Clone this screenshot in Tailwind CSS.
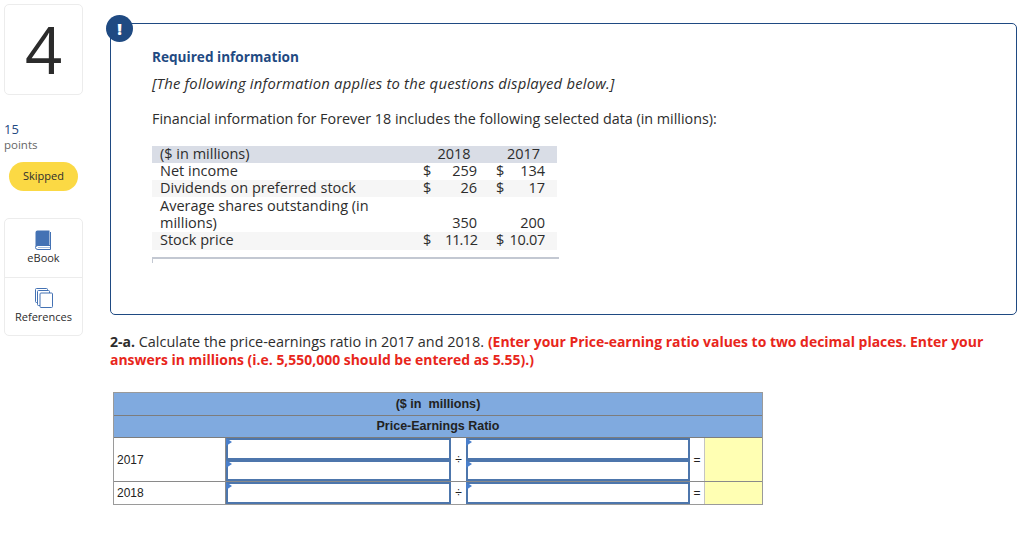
<!DOCTYPE html>
<html lang="en">
<head>
  <meta charset="UTF-8">
  <meta name="viewport" content="width=device-width, initial-scale=1.0">
  <title>Required information</title>
  <script src="https://cdn.jsdelivr.net/npm/@tailwindcss/browser@4"></script>
</head>
<body class="bg-white font-['Open_Sans',sans-serif] text-[#2d2d2d] overflow-hidden">
  <div class="flex w-[1024px] h-[541px]">
    <!-- Sidebar -->
    <aside class="w-[110px] shrink-0 pt-[4px] pl-[4px]">
      <div class="w-[79px] h-[91px] border border-[#ececec] rounded-[5px] flex items-center justify-center text-[65px] leading-none text-[#2b2b2b]">4</div>
      <div class="mt-[26px] text-[13px] leading-[16px] font-medium text-[#1f4a82]">15</div>
      <div class="text-[11.5px] leading-[15px] text-[#666]">points</div>
      <div class="mt-[10px] ml-[5px] w-[69px] h-[29px] rounded-full bg-[#fbd944] flex items-center justify-center text-[11px]">Skipped</div>
      <div class="mt-[27px] w-[79px] h-[118px] border border-[#ececec] rounded-[5px] flex flex-col">
        <div class="h-[59px] border-b border-[#ececec] flex flex-col items-center pt-[11px]">
          <svg width="17" height="20" viewBox="0 0 17 20">
            <path d="M2.5 0.5H14.5V15.5H3.5Q1 15.5 0.5 17V2.5Q0.5 0.5 2.5 0.5Z" fill="#4472b4"/>
            <path d="M15.5 2V19.5H3Q0.5 19.5 0.5 17.5Q0.5 15.5 3 15.5H15" fill="none" stroke="#4472b4" stroke-width="1"/>
            <path d="M3 17.5H15" stroke="#a9c0e0" stroke-width="1"/>
          </svg>
          <div class="mt-[1px] text-[11px] leading-[14px]">eBook</div>
        </div>
        <div class="flex-1 flex flex-col items-center pt-[10px]">
          <svg width="18" height="20" viewBox="0 0 18 20" fill="#fff" stroke="#4472b4" stroke-width="1">
            <rect x="0.5" y="0.5" width="12" height="14" rx="1"/>
            <rect x="2.5" y="2.5" width="12" height="15" rx="1"/>
            <rect x="5" y="5" width="12.5" height="14.5" rx="1"/>
          </svg>
          <div class="mt-[2px] text-[11px] leading-[14px]">References</div>
        </div>
      </div>
    </aside>

    <main class="flex-1 pt-[23px]">
      <!-- Callout -->
      <section class="relative w-[907px] h-[292px] border border-[#1f4a82] rounded-[5px] pl-[41px] pt-[24px]">
        <div class="absolute left-[-5px] top-[-9px] w-[27px] h-[27px] rounded-full bg-[#1f4a82] flex items-center justify-center text-white text-[16px] font-extrabold">!</div>
        <h2 class="text-[13.6px] leading-[18px] font-bold text-[#1f4a82]">Required information</h2>
        <p class="mt-[8px] text-[14.8px] leading-[18px] italic tracking-[0.22px]">[The following information applies to the questions displayed below.]</p>
        <p class="mt-[18px] text-[14.33px] leading-[18px]">Financial information for Forever 18 includes the following selected data (in millions):</p>

        <table class="mt-[18px] w-[405px] table-fixed border-collapse text-[14.5px] leading-[15px]">
          <colgroup>
            <col class="w-[271px]"><col class="w-[20px]"><col class="w-[53px]"><col class="w-[20px]"><col class="w-[41px]">
          </colgroup>
          <tbody>
            <tr class="bg-[#d9dde6]">
              <td class="pl-[8px] pb-[2px]">($ in millions)</td>
              <td colspan="2" class="text-center pr-[11px] pb-[2px]">2018</td>
              <td colspan="2" class="text-center pr-[6px] pb-[2px]">2017</td>
            </tr>
            <tr>
              <td class="pl-[8px] pb-[2px]">Net income</td>
              <td class="pb-[2px]">$</td><td class="text-right pr-[19px] pb-[2px]">259</td>
              <td class="pb-[2px]">$</td><td class="text-right pr-[12px] pb-[2px]">134</td>
            </tr>
            <tr class="bg-[#f6f6f6]">
              <td class="pl-[8px] pb-[2px]">Dividends on preferred stock</td>
              <td class="pb-[2px]">$</td><td class="text-right pr-[19px] pb-[2px]">26</td>
              <td class="pb-[2px]">$</td><td class="text-right pr-[12px] pb-[2px]">17</td>
            </tr>
            <tr class="leading-[17px]">
              <td class="pl-[8px] pr-[40px] pb-[1px]">Average shares outstanding (in millions)</td>
              <td></td><td class="text-right pr-[19px] pb-[1px] align-bottom">350</td>
              <td></td><td class="text-right pr-[12px] pb-[1px] align-bottom">200</td>
            </tr>
            <tr class="bg-[#f6f6f6]">
              <td class="pl-[8px] pb-[3px]">Stock price</td>
              <td class="pb-[3px]">$</td><td class="text-right pr-[19px] pb-[3px] tracking-[-1px]">11.12</td>
              <td colspan="2" class="pr-[12px] pb-[3px]"><div class="flex justify-between"><span>$</span><span class="tracking-[-0.3px]">10.07</span></div></td>
            </tr>
          </tbody>
        </table>
        <div class="mt-[7px] w-[407px] h-[6px] border-t-2 border-l border-[#c3c8d2]"></div>
      </section>

      <!-- Question -->
      <p class="mt-[18px] w-[900px] text-[14.45px] leading-[17.5px] whitespace-nowrap"><b class="text-[14px]">2-a.</b> Calculate the price-earnings ratio in 2017 and 2018. <b class="text-[13.95px] text-[#e8261b]">(Enter your Price-earning ratio values to two decimal places. Enter your</b><br><b class="text-[13.95px] text-[#e8261b]">answers in millions (i.e. 5,550,000 should be entered as 5.55).)</b></p>

      <!-- Answer grid -->
      <div class="mt-[24px] ml-[3px] w-[650px] font-['Liberation_Sans',sans-serif] text-[12px] text-[#222] border border-[#9a9a9a]">
        <div class="h-[23px] bg-[#80aadf] border-b border-[#7d7d7d] flex items-center justify-center font-bold text-[12.6px]">($ in&nbsp; millions)</div>
        <div class="h-[22px] bg-[#80aadf] border-b border-[#7d7d7d] flex items-center justify-center font-bold text-[12.5px]">Price-Earnings Ratio</div>
        <div class="grid grid-cols-[112px_225px_15px_224px_15px_1fr] h-[44px] border-b border-[#8a8a8a]">
          <div class="flex items-center pl-[3px] border-r border-[#8a8a8a]">2017</div>
          <div class="flex flex-col">
            <div class="relative flex-1 border-2 border-[#4d76ac]"><span class="absolute left-[-2px] top-[-2px] border-y-[4px] border-l-[6px] border-y-transparent border-l-[#4a7fcb]"></span></div>
            <div class="relative flex-1 border-2 border-[#4d76ac]"><span class="absolute left-[-2px] top-[-2px] border-y-[4px] border-l-[6px] border-y-transparent border-l-[#4a7fcb]"></span></div>
          </div>
          <div class="flex items-center justify-center">÷</div>
          <div class="flex flex-col">
            <div class="relative flex-1 border-2 border-[#4d76ac]"><span class="absolute left-[-2px] top-[-2px] border-y-[4px] border-l-[6px] border-y-transparent border-l-[#4a7fcb]"></span></div>
            <div class="relative flex-1 border-2 border-[#4d76ac]"><span class="absolute left-[-2px] top-[-2px] border-y-[4px] border-l-[6px] border-y-transparent border-l-[#4a7fcb]"></span></div>
          </div>
          <div class="flex items-center justify-center border-r border-[#c4c4c4]">=</div>
          <div class="bg-[#ffffb3]"></div>
        </div>
        <div class="grid grid-cols-[112px_225px_15px_224px_15px_1fr] h-[22px]">
          <div class="flex items-center pl-[3px] border-r border-[#8a8a8a]">2018</div>
          <div class="relative border-2 border-[#4d76ac]"><span class="absolute left-[-2px] top-[-2px] border-y-[4px] border-l-[6px] border-y-transparent border-l-[#4a7fcb]"></span></div>
          <div class="flex items-center justify-center">÷</div>
          <div class="relative border-2 border-[#4d76ac]"><span class="absolute left-[-2px] top-[-2px] border-y-[4px] border-l-[6px] border-y-transparent border-l-[#4a7fcb]"></span></div>
          <div class="flex items-center justify-center border-r border-[#c4c4c4]">=</div>
          <div class="bg-[#ffffb3]"></div>
        </div>
      </div>
    </main>
  </div>
</body>
</html>
